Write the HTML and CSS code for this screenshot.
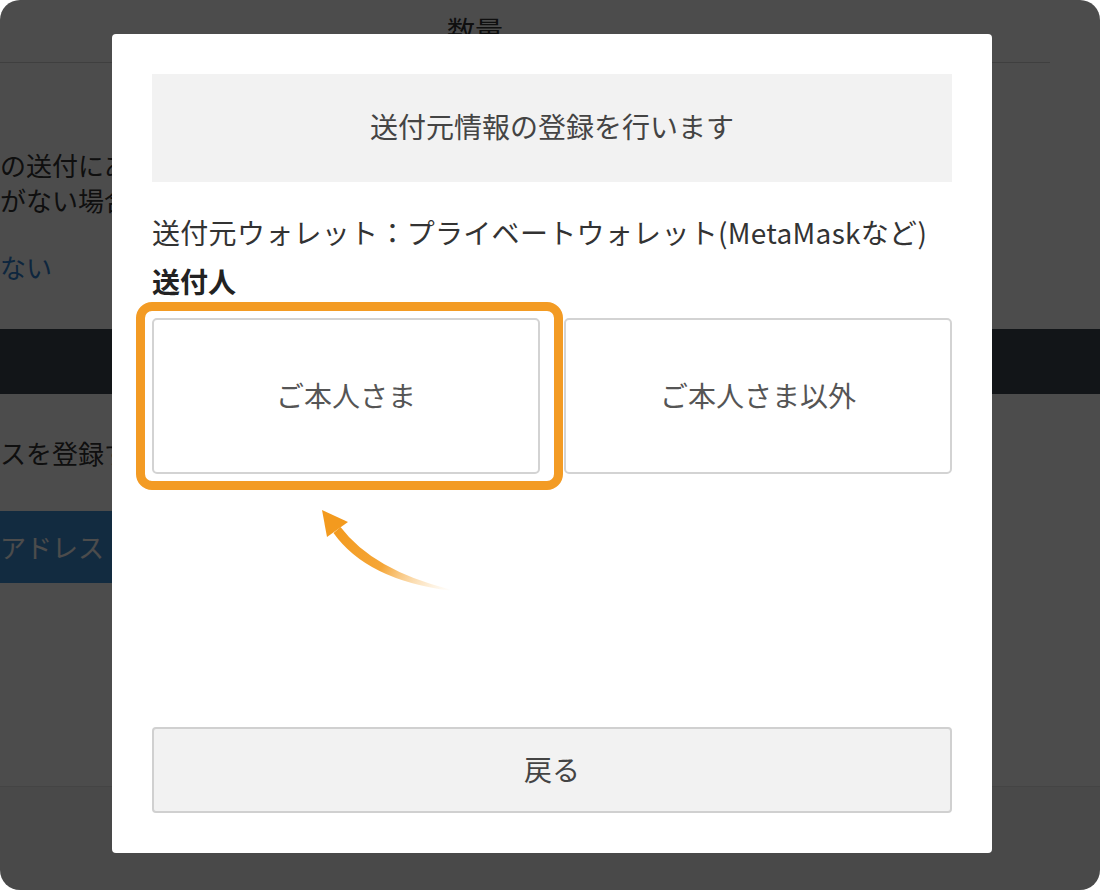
FILE: index.html
```html
<!DOCTYPE html>
<html lang="ja">
<head>
    <meta charset="utf-8">
    <title>送付元情報の登録</title>
    <link rel="stylesheet" href="styles.css">
</head>
<body>
    <div class="screen">
        <!-- page behind the dialog -->
        <div class="page">
            <div class="page-header">
                <h2 class="page-title">数量</h2>
            </div>
            <p class="page-text">の送付にあたり<br>がない場合は</p>
            <p class="page-link">ない</p>
            <div class="page-band"></div>
            <p class="page-text page-text-single">スを登録する</p>
            <div class="page-button">アドレス</div>
            <div class="page-footer"></div>
        </div>

        <div class="overlay"></div>

        <div class="modal">
            <div class="modal-info">送付元情報の登録を行います</div>
            <p class="modal-wallet">送付元ウォレット：プライベートウォレット(MetaMaskなど)</p>
            <p class="modal-label">送付人</p>
            <div class="choices">
                <div class="choice-wrap">
                    <button class="choice" type="button">ご本人さま</button>
                    <span class="highlight"></span>
                </div>
                <button class="choice" type="button">ご本人さま以外</button>
            </div>
            <button class="back" type="button">戻る</button>
        </div>

        <svg class="arrow" width="160" height="105" viewBox="0 0 160 105">
            <defs>
                <linearGradient id="arrow-fade" gradientUnits="userSpaceOnUse" x1="34" y1="34" x2="152" y2="96">
                    <stop offset="0" stop-color="#f39a1e"/>
                    <stop offset="0.45" stop-color="#f5a638"/>
                    <stop offset="1" stop-color="#fbd9a4" stop-opacity="0"/>
                </linearGradient>
            </defs>
            <polygon points="22,15 48,27 27,42" fill="#f39a1e"/>
            <path d="M40.5,32 Q73,75 150,94.4 L150,95.6 Q67,85 33.5,38 Z" fill="url(#arrow-fade)"/>
        </svg>
    </div>
</body>
</html>
```

FILE: styles.css
```css
body {
    margin: 0;
    background-color: #fff;
    font-family: "Noto Sans CJK JP", "Noto Sans", sans-serif;
}

.screen {
    position: relative;
    width: 1100px;
    height: 890px;
    border-radius: 20px;
    overflow: hidden;
    background-color: #fff;
}

/* page behind the overlay */
.page {
    height: 100%;
    display: flex;
    flex-direction: column;
    color: #333;
    font-size: 26px;
}

.page-header {
    width: 1050px;
    height: 62px;
    border-bottom: 1px solid #d4d4d4;
}

.page-title {
    margin: 0;
    padding: 10px 100px 0 0;
    text-align: center;
    font-size: 28px;
    font-weight: normal;
    line-height: 40px;
}

.page-text {
    margin: 84px 0 0;
    line-height: 35px;
}

.page-text-single {
    margin-top: 41px;
}

.page-link {
    margin: 32px 0 0;
    line-height: 35px;
    color: #2f80d0;
}

.page-band {
    height: 65px;
    margin-top: 45px;
    background-color: #3c4653;
}

.page-button {
    width: 300px;
    height: 72px;
    margin-top: 41px;
    line-height: 72px;
    color: #fff;
    background-color: #3f8fd5;
}

.page-footer {
    margin-top: auto;
    height: 103px;
    border-top: 1px solid #e4e4e4;
    background-color: #f4f4f4;
}

.overlay {
    position: absolute;
    inset: 0;
    background-color: rgba(0, 0, 0, 0.7);
}

/* dialog */
.modal {
    position: absolute;
    left: 112px;
    top: 34px;
    width: 880px;
    height: 819px;
    box-sizing: border-box;
    padding: 40px;
    display: flex;
    flex-direction: column;
    background-color: #fff;
    border-radius: 4px;
    font-size: 28px;
}

.modal-info {
    height: 108px;
    box-sizing: border-box;
    padding-bottom: 4px;
    display: flex;
    align-items: center;
    justify-content: center;
    background-color: #f2f2f2;
    color: #444;
}

.modal-wallet {
    margin: 30px 0 0;
    line-height: 40px;
    color: #333;
    letter-spacing: 0.3px;
}

.modal-label {
    margin: 9px 0 0;
    line-height: 40px;
    font-weight: bold;
    color: #222;
}

.choices {
    margin-top: 17px;
    display: grid;
    grid-template-columns: 1fr 1fr;
    gap: 24px;
    height: 156px;
}

.choice-wrap {
    position: relative;
    display: flex;
}

.choice {
    flex: 1;
    padding-bottom: 4px;
    font-family: inherit;
    font-size: 28px;
    color: #555;
    background-color: #fff;
    border: 2px solid #d3d3d3;
    border-radius: 5px;
    cursor: pointer;
}

.highlight {
    position: absolute;
    left: -16px;
    top: -16px;
    width: 427px;
    height: 188px;
    box-sizing: border-box;
    border: 9px solid #f39b24;
    border-radius: 16px;
    pointer-events: none;
}

.back {
    margin-top: auto;
    height: 86px;
    padding-bottom: 3px;
    font-family: inherit;
    font-size: 28px;
    color: #444;
    background-color: #f2f2f2;
    border: 2px solid #d0d0d0;
    border-radius: 4px;
    cursor: pointer;
}

.arrow {
    position: absolute;
    left: 300px;
    top: 495px;
}
```
